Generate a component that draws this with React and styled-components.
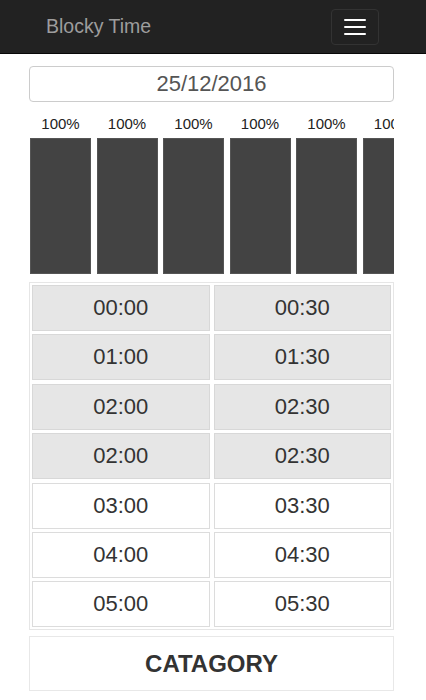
import React from "react";
import styled, { createGlobalStyle } from "styled-components";

const GlobalStyle = createGlobalStyle`
  body {
    margin: 0;
    background: #fff;
    font-family: "Liberation Sans", Arial, sans-serif;
    color: #333;
  }
`;

const Navbar = styled.nav`
  height: 53px;
  background: #222;
  border-bottom: 1px solid #080808;
  display: flex;
  align-items: center;
  justify-content: space-between;
  padding: 0 47px 0 46px;
`;

const Brand = styled.div`
  font-size: 19.5px;
  color: #9d9d9d;
`;

const Toggle = styled.button`
  width: 48px;
  height: 36px;
  box-sizing: border-box;
  background: transparent;
  border: 1px solid #333;
  border-radius: 4px;
  display: flex;
  flex-direction: column;
  align-items: center;
  justify-content: center;
  gap: 5px;
  padding: 0;
`;

const IconBar = styled.span`
  display: block;
  width: 22px;
  height: 2px;
  border-radius: 1px;
  background: #fff;
`;

const Container = styled.main`
  padding: 12px 32px 8px 29px;
`;

const DateInput = styled.div`
  height: 36px;
  box-sizing: border-box;
  border: 1px solid #ccc;
  border-radius: 4px;
  display: flex;
  align-items: center;
  justify-content: center;
  font-size: 22px;
  color: #555;
`;

const Bars = styled.div`
  display: flex;
  gap: 5.5px;
  overflow: hidden;
  margin-top: 12px;
  padding-left: 1px;
`;

const BarColumn = styled.div`
  flex: 0 0 61px;
  display: flex;
  flex-direction: column;
  align-items: center;
`;

const BarLabel = styled.div`
  font-size: 15px;
  line-height: 20px;
  height: 24px;
  color: #222;
  white-space: nowrap;
`;

const Bar = styled.div`
  width: 100%;
  height: 136px;
  background: #434343;
  box-sizing: border-box;
  border: 1px solid #555;
`;

const SlotGrid = styled.div`
  margin-top: 8px;
  border: 1px solid #e6e6e6;
  padding: 2px;
  display: grid;
  grid-template-columns: 1fr 1fr;
  column-gap: 4px;
  row-gap: 3.4px;
`;

const Slot = styled.div`
  height: 46px;
  box-sizing: border-box;
  border: 1px solid ${(p) => (p.$used ? "#d8d8d8" : "#dcdcdc")};
  background: ${(p) => (p.$used ? "#e6e6e6" : "#fff")};
  display: flex;
  align-items: center;
  justify-content: center;
  font-size: 22px;
  color: #333;
`;

const Category = styled.div`
  margin-top: 6px;
  height: 55px;
  box-sizing: border-box;
  border: 1px solid #e8e8e8;
  display: flex;
  align-items: center;
  justify-content: center;
  font-size: 24px;
  font-weight: bold;
  color: #333;
`;

const rows = [
  ["00:00", "00:30", true],
  ["01:00", "01:30", true],
  ["02:00", "02:30", true],
  ["02:00", "02:30", true],
  ["03:00", "03:30", false],
  ["04:00", "04:30", false],
  ["05:00", "05:30", false],
];

const App = () => {
  return (
    <>
      <GlobalStyle />
      <Navbar>
        <Brand>Blocky Time</Brand>
        <Toggle aria-label="menu">
          <IconBar />
          <IconBar />
          <IconBar />
        </Toggle>
      </Navbar>
      <Container>
        <DateInput>25/12/2016</DateInput>
        <Bars>
          {[0, 1, 2, 3, 4, 5, 6].map((i) => (
            <BarColumn key={i}>
              <BarLabel>100%</BarLabel>
              <Bar />
            </BarColumn>
          ))}
        </Bars>
        <SlotGrid>
          {rows.map(([a, b, used], i) => (
            <React.Fragment key={i}>
              <Slot $used={used}>{a}</Slot>
              <Slot $used={used}>{b}</Slot>
            </React.Fragment>
          ))}
        </SlotGrid>
        <Category>CATAGORY</Category>
      </Container>
    </>
  );
};

export default App;
